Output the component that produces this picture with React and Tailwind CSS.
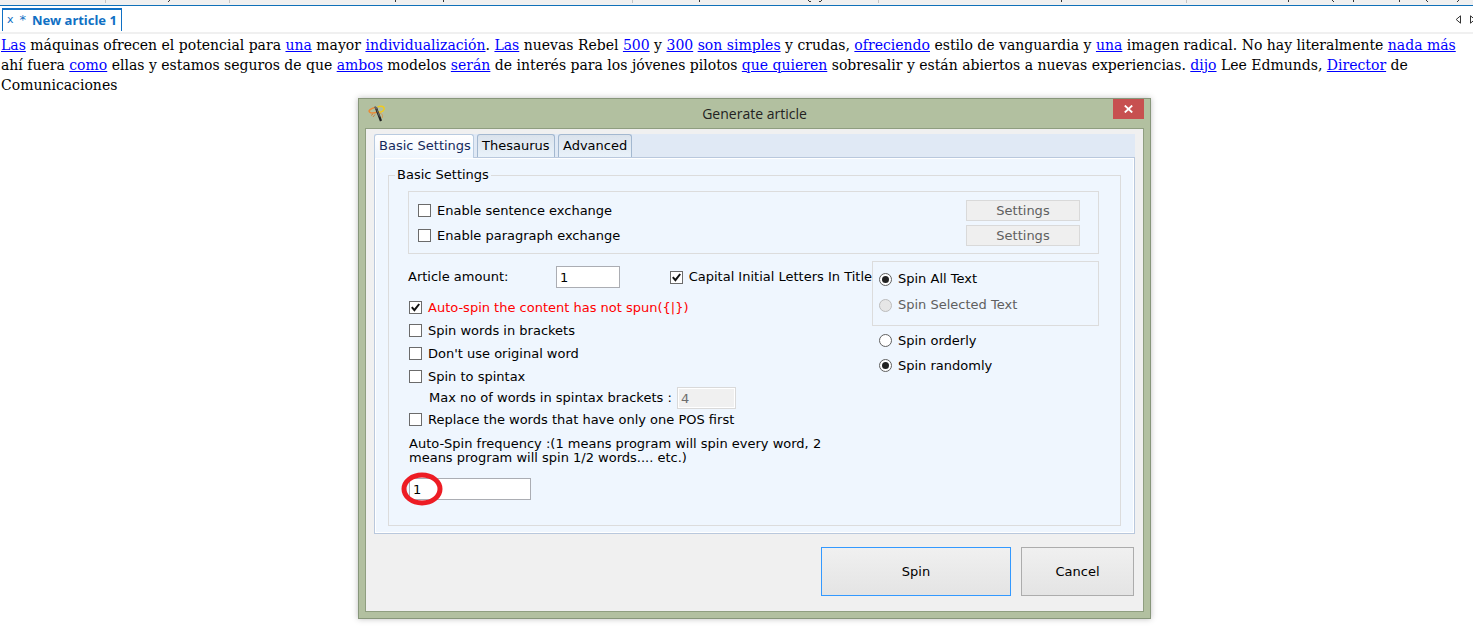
import React from 'react';

const articleLines = [
    [
        ['Las', true], [' máquinas ofrecen el potencial para '], ['una', true], [' mayor '],
        ['individualización', true], ['. '], ['Las', true], [' nuevas Rebel '], ['500', true], [' y '],
        ['300', true], [' '], ['son simples', true], [' y crudas, '], ['ofreciendo', true],
        [' estilo de vanguardia y '], ['una', true], [' imagen radical. No hay literalmente '], ['nada más', true],
    ],
    [
        ['ahí fuera '], ['como', true], [' ellas y estamos seguros de que '], ['ambos', true], [' modelos '],
        ['serán', true], [' de interés para los jóvenes pilotos '], ['que quieren', true],
        [' sobresalir y están abiertos a nuevas experiencias. '], ['dijo', true], [' Lee Edmunds, '],
        ['Director', true], [' de'],
    ],
    [['Comunicaciones']],
];

function StatusStrip() {
    return (
        <div className="h-[5px] overflow-hidden bg-[#f0f0f0]">
            <svg width="1473" height="5" className="block max-w-none" shapeRendering="crispEdges" aria-hidden="true">
                <path d="M105.5 0v3M229.5 0v3M632.5 0v3M878.5 0v3M1186.5 0v3" stroke="#c4c4c4" />
                <path
                    d="M169.5 0v1M168 1.5h1M395.5 0v2M443.5 0v2M699.5 0v2M808.5 0v1M809 1.5h2M821.5 0v1M819 1.5h2M1061.5 0v2M1288.5 0v2M1332.5 0v1M1333 1.5h1M1353.5 0v2M1399.5 0v2M1426.5 0v1M1427 1.5h1M1458.5 0v1M1457 1.5h1"
                    stroke="#333"
                />
            </svg>
        </div>
    );
}

function ArticleTabs() {
    return (
        <div className="flex h-[29px] items-end justify-between border-t border-b-2 border-t-[#1070b8] border-b-[#f0f0f0] bg-white pl-[2px]">
            <button className="mb-px flex h-[23px] items-center gap-[6px] border-x border-t-2 border-[#1070c4] px-1 pb-[2px] text-[13px] text-[#1070c4]">
                <span className="text-[11px]">x</span>
                <span>*</span>
                <span className="font-['Noto_Sans'] font-bold">New article 1</span>
            </button>
            <div className="flex gap-2 self-center overflow-hidden">
                <button aria-label="Previous tab">
                    <svg width="7" height="9" viewBox="0 0 7 9" fill="none" stroke="#333"><path d="M5.5 .8v7.4L1.2 4.5z" /></svg>
                </button>
                <button aria-label="Next tab" className="w-[3px] overflow-hidden">
                    <svg width="7" height="9" viewBox="0 0 7 9" fill="none" stroke="#333" className="max-w-none"><path d="M.5 .8v7.4L4.8 4.5z" /></svg>
                </button>
            </div>
        </div>
    );
}

function Article() {
    return (
        <div className="px-px pt-px font-['DejaVu_Serif',serif] text-[14px] leading-[20px] whitespace-nowrap text-black">
            {articleLines.map((line, i) => (
                <p key={i}>
                    {line.map(([text, linked], j) => (
                        linked ? <a key={j} href="#" className="text-[#0000ff] underline">{text}</a> : text
                    ))}
                </p>
            ))}
        </div>
    );
}

function Check({ label, className = '', checked = false }) {
    return (
        <label className={`flex items-center gap-[6px] whitespace-nowrap ${className}`}>
            <span className="relative h-[13px] w-[13px] shrink-0">
                <input
                    type="checkbox"
                    defaultChecked={checked}
                    className="peer block h-[13px] w-[13px] appearance-none border border-[#6b6b6b] bg-white"
                />
                <svg className="pointer-events-none absolute inset-0 hidden peer-checked:block" width="13" height="13" viewBox="0 0 13 13" fill="none" stroke="#111" strokeWidth="2">
                    <path d="M2.8 6.2l2.6 3L10.2 3" />
                </svg>
            </span>
            {label}
        </label>
    );
}

function Radio({ label, name, className = '', checked = false, disabled = false }) {
    return (
        <label className={`flex items-center gap-[6px] ${disabled ? 'text-[#606060]' : ''} ${className}`}>
            <input
                type="radio"
                name={name}
                defaultChecked={checked}
                disabled={disabled}
                className="grid h-[13px] w-[13px] shrink-0 appearance-none place-items-center rounded-full border border-[#606060] bg-white before:h-[7px] before:w-[7px] before:rounded-full checked:before:bg-[#222] disabled:border-[#bcbcbc] disabled:bg-[#e6e6e6]"
            />
            {label}
        </label>
    );
}

function WandIcon() {
    return (
        <svg width="18" height="18" viewBox="0 0 18 18" fill="none" aria-hidden="true">
            <path d="M9.500 2C13 .5 17 1.500 16 4.500C15 7 12 7.500 9.500 6.500" stroke="#f0cb1e" strokeWidth="1.500" />
            <path d="M7 2.500C3 3.500 0 5.500 1.500 7C3 8.500 7 8 10 6.800" stroke="#ea8a35" strokeWidth="1.500" />
            <path d="M11 8C14 8.500 15.500 10 14 13" stroke="#d99a55" />
            <path d="M8 3L13 16" stroke="#222" strokeWidth="2.200" />
            <path d="M6.500 1.800L9.500 4" stroke="#666" strokeWidth="2" />
            <path d="M9 5L11.500 11.500" stroke="#999" strokeWidth=".6" />
            <path d="M3 10.500L5 9M5 12L7 9.500" stroke="#c98246" />
        </svg>
    );
}

function SettingsButton() {
    return (
        <button disabled className="h-[21px] w-[114px] border border-[#d9d9d9] bg-[#efefef] text-[#606060]">
            Settings
        </button>
    );
}

function Tab({ label, className, active = false }) {
    return (
        <button
            role="tab"
            aria-selected={active}
            className={`rounded-t-[3px] border border-b-0 pl-1 text-left whitespace-nowrap ${className} ${active
                ? 'relative -mb-px h-[24px] border-[#b9cbe0] bg-linear-to-b from-white to-[#eff6fe] pb-px text-[#15295c]'
                : 'h-[23px] border-[#a3b8d0] bg-linear-to-b from-[#dbe3ec] to-[#e9f2fa]'}`}
        >
            {label}
        </button>
    );
}

function BasicSettings() {
    return (
        <fieldset className="min-w-0 border border-[#dcdcdc] pr-[21px] pb-[25px] pl-[19px]">
            <legend className="-ml-[13px] px-[2px] leading-[16px]">Basic Settings</legend>

            <div className="mt-2 space-y-1 border border-[#dcdcdc] pt-2 pr-[18px] pb-[7px] pl-[9px]">
                <div className="flex items-center justify-between">
                    <Check label="Enable sentence exchange" />
                    <SettingsButton />
                </div>
                <div className="flex items-center justify-between">
                    <Check label="Enable paragraph exchange" />
                    <SettingsButton />
                </div>
            </div>

            <div className="mt-[7px] flex">
                <div className="min-w-0 flex-1 pt-[5px]">
                    <div className="flex items-center justify-between">
                        <div className="flex items-center">
                            <label htmlFor="amount" className="w-[148px]">Article amount:</label>
                            <input id="amount" defaultValue="1" className="h-[22px] w-[64px] border border-[#abadb3] bg-white px-[3px]" />
                        </div>
                        <Check label="Capital Initial Letters In Title" checked />
                    </div>
                    <div className="mt-2 pl-px">
                        <Check label="Auto-spin the content has not spun({|})" checked className="h-[23px] text-[#ff0000]" />
                        <Check label="Spin words in brackets" className="h-[23px]" />
                        <Check label="Don't use original word" className="h-[23px]" />
                        <Check label="Spin to spintax" className="h-[23px]" />
                        <div className="flex h-5 items-center pl-5">
                            <label htmlFor="max-words" className="w-[248px]">Max no of words in spintax brackets :</label>
                            <input id="max-words" disabled defaultValue="4" className="h-[22px] w-[59px] border border-[#d9d9d9] bg-[#f0f0f0] px-[3px] text-[#6d6d6d] inset-ring inset-ring-white" />
                        </div>
                        <Check label="Replace the words that have only one POS first" className="h-[23px]" />
                        <label htmlFor="frequency" className="mt-[6px] block w-[420px] leading-[14px]">
                            Auto-Spin frequency :(1 means program will spin every word, 2 means program will spin 1/2 words.... etc.)
                        </label>
                        <div className="relative mt-[13px]">
                            <input id="frequency" defaultValue="1" className="block h-[22px] w-[122px] border border-[#abadb3] bg-white px-[3px]" />
                            <svg className="pointer-events-none absolute -top-[6px] -left-[8px]" width="42" height="34" fill="none">
                                <ellipse cx="21" cy="17" rx="18" ry="14" stroke="#ed1c24" strokeWidth="5" />
                            </svg>
                        </div>
                    </div>
                </div>

                <div className="w-[227px] shrink-0">
                    <div className="border border-[#dcdcdc] pt-1 pb-[7px] pl-[6px]">
                        <Radio name="scope" label="Spin All Text" checked className="h-[26px]" />
                        <Radio name="scope" label="Spin Selected Text" disabled className="h-[26px]" />
                    </div>
                    <div className="mt-[2px] pl-[7px]">
                        <Radio name="order" label="Spin orderly" className="h-[25px]" />
                        <Radio name="order" label="Spin randomly" checked className="h-[25px]" />
                    </div>
                </div>
            </div>
        </fieldset>
    );
}

function GenerateDialog() {
    return (
        <div role="dialog" aria-label="Generate article" className="absolute top-[98px] left-[358px] w-[793px] border border-[#87967a] bg-[#b2c0a0] px-[6px] pb-[6px] shadow-[0_0_6px_rgba(0,0,0,0.25)]">
            <div className="flex h-[29px] items-center justify-between">
                <div className="w-[31px] pl-[3px]"><WandIcon /></div>
                <h2 className="font-['Open_Sans',sans-serif] text-[14px] text-[#222]">Generate article</h2>
                <button aria-label="Close" className="grid h-5 w-[31px] place-items-center self-start bg-[#c75050]">
                    <svg width="9" height="8" viewBox="0 0 9 8" stroke="#fff" strokeWidth="1.8"><path d="M.8 .5l7.400 7M8.200 .5L.8 7.500" /></svg>
                </button>
            </div>
            <div className="border border-[#8f9e80] bg-[#f0f0f0] px-2 pt-[5px] pb-[15px]">
                <div role="tablist" className="flex h-[23px] items-end gap-[3px] bg-[#e0e9f5]">
                    <Tab label="Basic Settings" active className="w-[100px]" />
                    <Tab label="Thesaurus" className="w-[78px]" />
                    <Tab label="Advanced" className="w-[74px]" />
                </div>
                <div className="border border-[#b9c8dd] bg-[#eff6fe] px-[13px] pt-[9px] pb-[7px] inset-ring inset-ring-white">
                    <BasicSettings />
                </div>
                <div className="mt-[13px] flex justify-end gap-[10px] pr-px">
                    <button className="h-[49px] w-[190px] border border-[#3399ff] bg-linear-to-b from-[#f0f0f0] to-[#e4e4e4]">Spin</button>
                    <button className="h-[49px] w-[113px] border border-[#acacac] bg-linear-to-b from-[#f0f0f0] to-[#e4e4e4]">Cancel</button>
                </div>
            </div>
        </div>
    );
}

export default function App() {
    return (
        <div className="relative min-h-screen overflow-hidden bg-white font-['DejaVu_Sans',sans-serif] text-[13px] leading-[16px] text-black">
            <StatusStrip />
            <ArticleTabs />
            <Article />
            <GenerateDialog />
        </div>
    );
}
